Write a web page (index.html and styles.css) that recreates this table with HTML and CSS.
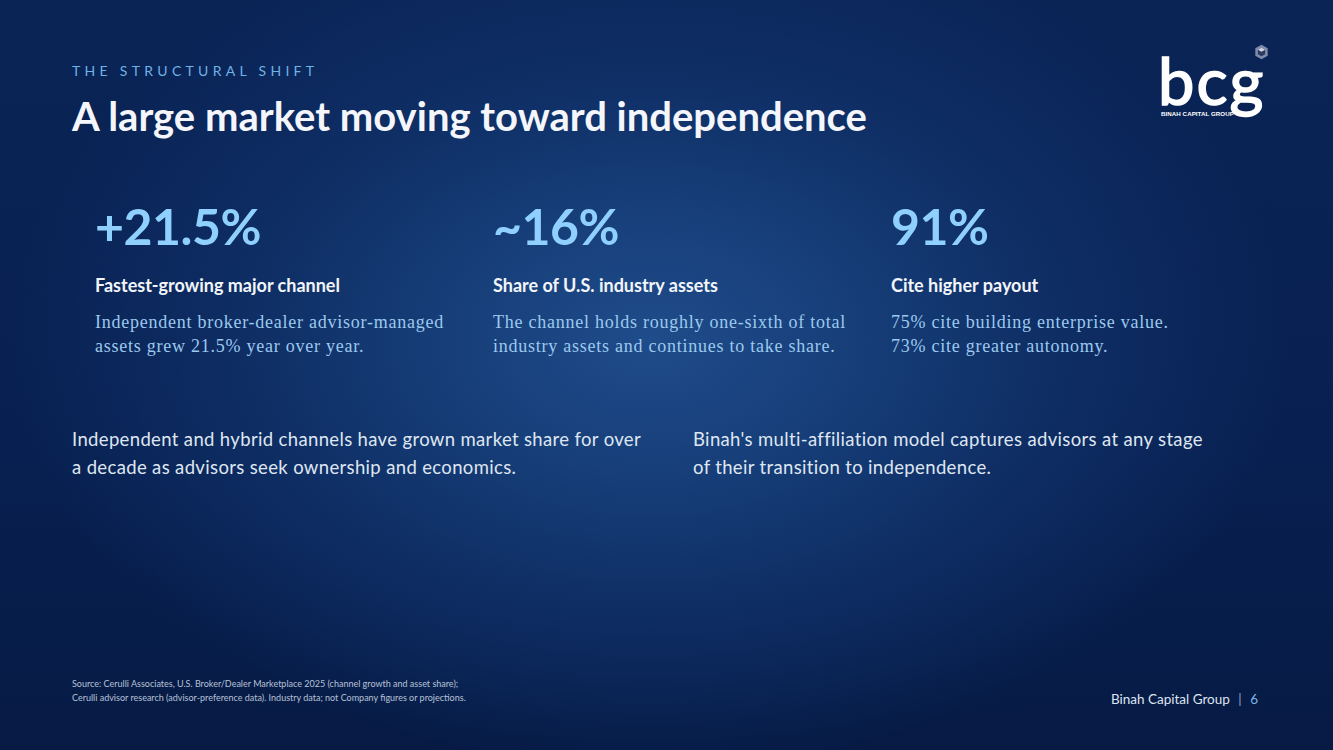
FILE: index.html
```html
<!DOCTYPE html>
<html>
<head>
<meta charset="utf-8">
<link rel="stylesheet" href="styles.css">
</head>
<body>
<div class="slide">
  <header class="head">
    <div class="titles">
      <div class="eyebrow">THE STRUCTURAL SHIFT</div>
      <h1 class="title">A large market moving toward independence</h1>
    </div>
    <div class="logo">
      <svg class="hex" width="15" height="16" viewBox="0 0 14 15">
        <polygon points="7,0.8 12.8,4.1 12.8,10.9 7,14.2 1.2,10.9 1.2,4.1" fill="#7f8cab"/>
        <polygon points="7,3.4 10.4,5.3 10.4,9.5 7,11.4 3.6,9.5 3.6,5.3" fill="#2b3b63"/>
        <polygon points="7,3.4 10.4,5.3 7,7.2 3.6,5.3" fill="#d0d6e6"/>
      </svg>
      <div class="bcg">bcg</div>
      <div class="bcg-sub">BINAH CAPITAL GROUP</div>
    </div>
  </header>

  <section class="stats">
    <div class="stat">
      <div class="num">+21.5%</div>
      <div class="label">Fastest-growing major channel</div>
      <p class="desc">Independent broker-dealer advisor-managed assets grew 21.5% year over year.</p>
    </div>
    <div class="stat">
      <div class="num">~16%</div>
      <div class="label">Share of U.S. industry assets</div>
      <p class="desc">The channel holds roughly one-sixth of total industry assets and continues to take share.</p>
    </div>
    <div class="stat">
      <div class="num">91%</div>
      <div class="label">Cite higher payout</div>
      <p class="desc">75% cite building enterprise value.<br>73% cite greater autonomy.</p>
    </div>
  </section>

  <section class="notes">
    <p class="note">Independent and hybrid channels have grown market share for over a decade as advisors seek ownership and economics.</p>
    <p class="note note-right">Binah's multi-affiliation model captures advisors at any stage of their transition to independence.</p>
  </section>

  <footer class="foot">
    <div class="source">Source: Cerulli Associates, U.S. Broker/Dealer Marketplace 2025 (channel growth and asset share);<br>Cerulli advisor research (advisor-preference data). Industry data; not Company figures or projections.</div>
    <div class="brand">Binah Capital Group <span class="sep">|</span> <span class="page">6</span></div>
  </footer>
</div>
</body>
</html>
```

FILE: styles.css
```css
html, body {
  margin: 0;
  padding: 0;
}
body {
  width: 1333px;
  height: 750px;
  overflow: hidden;
  font-family: Lato, "Open Sans", sans-serif;
}
.slide {
  box-sizing: border-box;
  width: 1333px;
  height: 750px;
  padding: 62px 63px 0 72px;
  display: flex;
  flex-direction: column;
  background:
    radial-gradient(ellipse 640px 430px at 650px 340px, #1f4c8a 0%, #173f7a 30%, #0f2f66 60%, rgba(9,33,82,0) 100%),
    linear-gradient(180deg, #0a2456 0%, #082051 60%, #061a44 100%);
  color: #fff;
}
.head {
  display: flex;
  justify-content: space-between;
  align-items: flex-start;
}
.eyebrow {
  font-size: 14px;
  letter-spacing: 4.3px;
  color: #6fb2e6;
  line-height: 18px;
}
.title {
  margin: 12px 0 0;
  font-size: 40px;
  font-weight: 700;
  line-height: 48px;
  color: #f4f6fb;
  letter-spacing: 0;
}
.logo {
  position: relative;
  width: 110px;
  height: 76px;
  margin-top: -10px;
}
.hex {
  position: absolute;
  right: 1px;
  top: -8px;
}
.bcg {
  position: absolute;
  left: -2px;
  top: 2px;
  font-family: Lato, sans-serif;
  font-weight: 400;
  font-size: 65px;
  line-height: 52px;
  letter-spacing: 2px;
  color: #fff;
  -webkit-text-stroke: 1.6px #fff;
}
.bcg-sub {
  position: absolute;
  left: 1px;
  top: 58px;
  font-family: "Liberation Sans", sans-serif;
  font-weight: 700;
  font-size: 6.2px;
  line-height: 8px;
  letter-spacing: 0.05px;
  color: #fff;
}
.stats {
  display: grid;
  grid-template-columns: 398px 398px 1fr;
  margin: 58px 0 0 23px;
}
.num {
  font-size: 50px;
  font-weight: 700;
  line-height: 56px;
  color: #8fd0ff;
  letter-spacing: -0.5px;
}
.label {
  margin-top: 20px;
  font-size: 18px;
  font-weight: 700;
  line-height: 22px;
  color: #f2f5fa;
}
.desc {
  margin: 14px 0 0;
  font-family: "Liberation Serif", serif;
  font-size: 18px;
  letter-spacing: 0.75px;
  line-height: 24px;
  color: #9cc9ee;
  width: 360px;
}
.notes {
  display: grid;
  grid-template-columns: 621px 1fr;
  margin-top: 67px;
}
.note {
  margin: 0;
  font-size: 18.5px;
  letter-spacing: 0.35px;
  line-height: 28px;
  color: #dfe6f1;
  width: 582px;
}
.note-right {
  width: 522px;
}
.foot {
  margin-top: auto;
  margin-bottom: 45px;
  display: flex;
  justify-content: space-between;
  align-items: flex-end;
}
.source {
  font-size: 9px;
  line-height: 14px;
  color: #b7c2d6;
}
.brand {
  font-size: 13.5px;
  color: #dde4ef;
  margin-bottom: -2px;
  margin-right: 12px;
}
.sep {
  margin: 0 5px;
  color: #8aa6cc;
}
.page {
  color: #7fb3e6;
}
```
